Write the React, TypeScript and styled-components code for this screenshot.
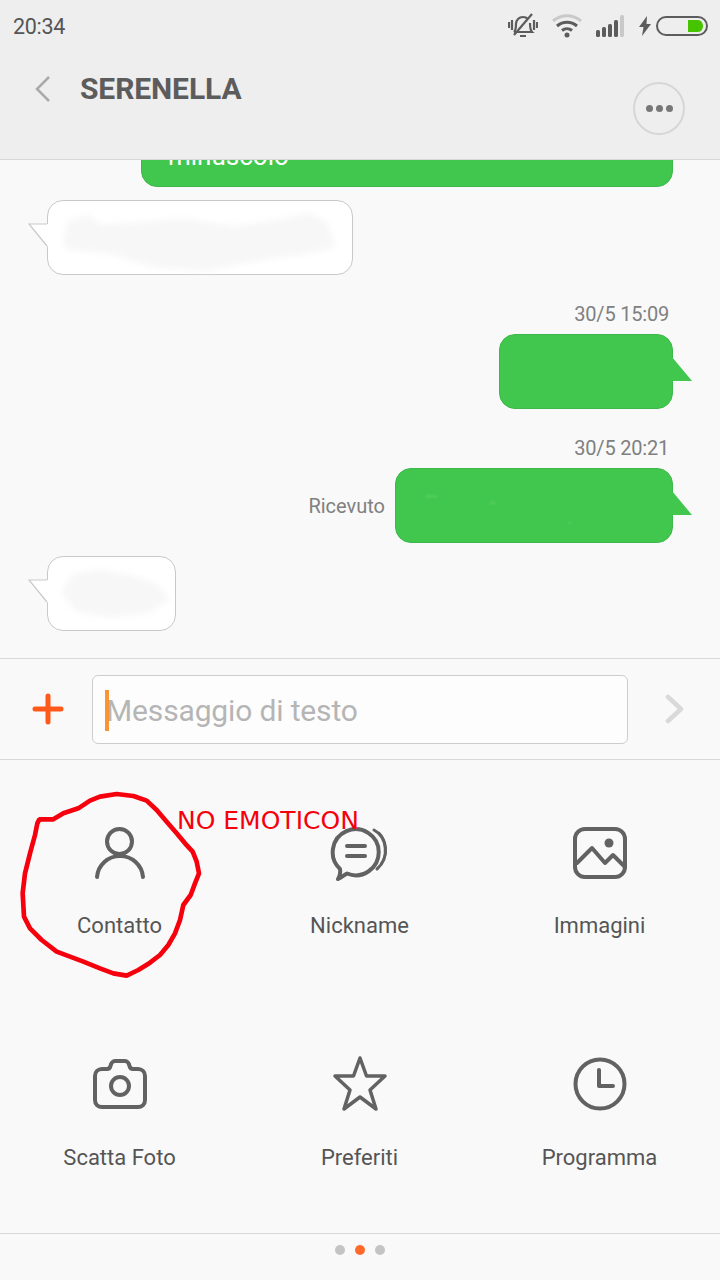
import styled, {createGlobalStyle} from 'styled-components'

const GlobalStyle = createGlobalStyle`
  html, body {
    margin: 0;
    padding: 0;
    background: #f9f9f9;
  }
`

const Page = styled.div`
  position: relative;
  width: 720px;
  height: 1280px;
  overflow: hidden;
  display: flex;
  flex-direction: column;
  background: #f9f9f9;
  font-family: Roboto, "Liberation Sans", sans-serif;
`

const Header = styled.header`
  height: 159px;
  flex: none;
  background: #eeeeee;
  border-bottom: 1px solid #d8d8d8;
`

const StatusBar = styled.div`
  height: 52px;
  display: flex;
  align-items: center;
  justify-content: space-between;
  padding: 0 12px 0 13px;
  color: #555;
  font-size: 21.500px;
  letter-spacing: -0.300px;
`

const StatusIcons = styled.div`
  display: flex;
  align-items: center;
  svg {
    display: block;
  }
`

const NavBar = styled.div`
  display: flex;
  align-items: flex-start;
  padding: 22px 35px 0 34px;
`

const Title = styled.h1`
  flex: 1;
  margin: 0 0 0 28px;
  font-size: 30px;
  line-height: 30px;
  font-weight: 700;
  letter-spacing: -0.100px;
  color: #5c5c5c;
`

const MoreButton = styled.div`
  width: 48px;
  height: 49px;
  margin-top: 8px;
  border: 2px solid #d6d6d6;
  border-radius: 50%;
  display: flex;
  align-items: center;
  justify-content: center;
  gap: 3px;
`

const MoreDot = styled.span`
  width: 7px;
  height: 7px;
  border-radius: 50%;
  background: #777;
`

const Chat = styled.main`
  height: 498px;
  flex: none;
  box-sizing: border-box;
  overflow: hidden;
  display: flex;
  flex-direction: column;
  justify-content: flex-end;
  padding: 0 47px 27px 47px;
`

const Row = styled.div<{$out?: boolean; $gap: number}>`
  flex: none;
  display: flex;
  align-items: center;
  justify-content: ${p => (p.$out ? 'flex-end' : 'flex-start')};
  margin-top: ${p => p.$gap}px;
`

const Stamp = styled.div`
  flex: none;
  margin: 27px 4px 8px 0;
  text-align: right;
  font-size: 20px;
  letter-spacing: -0.200px;
  line-height: 24px;
  color: #808080;
`

const Delivered = styled.span`
  margin-right: 10px;
  font-size: 20px;
  color: #808080;
`

const Bubble = styled.div<{$out?: boolean; $width: number; $height?: number}>`
  position: relative;
  box-sizing: border-box;
  width: ${p => p.$width}px;
  height: ${p => p.$height ?? 75}px;
  border-radius: 16px;
  border: 1px solid ${p => (p.$out ? '#3db84a' : '#c9c9c9')};
  background: ${p => (p.$out ? '#41c74e' : '#ffffff')};
  color: #fff;
  font-size: 26px;
  line-height: 34px;
  padding: 22px 26px 0;
`

const Tail = styled.svg<{$out?: boolean}>`
  position: absolute;
  top: 22px;
  ${p => (p.$out ? 'right: -20px;' : 'left: -20px;')}
  width: 20px;
  height: 26px;
`

const Smudge = styled.svg<{$blur: number}>`
  position: absolute;
  left: 0;
  top: 0;
  width: 100%;
  height: 100%;
  filter: blur(${p => p.$blur}px);
`

const Composer = styled.div`
  height: 100px;
  flex: none;
  border-top: 1px solid #d8d8d8;
  border-bottom: 1px solid #d8d8d8;
  display: flex;
  align-items: center;
  padding: 0 35px 0 32px;
`

const ComposerIcon = styled.svg`
  flex: none;
  display: block;
`

const InputBox = styled.div`
  position: relative;
  box-sizing: border-box;
  flex: 1;
  height: 69px;
  margin: 0 37px 0 28px;
  padding: 2px 0 0 13px;
  display: flex;
  align-items: center;
  background: #fdfdfd;
  border: 1px solid #cdcdcd;
  border-radius: 6px;
  color: #b5b5b5;
  font-size: 30px;
  letter-spacing: -0.150px;
`

const Caret = styled.span`
  position: absolute;
  left: 12px;
  top: 14px;
  width: 4px;
  height: 41px;
  background: #f98a20;
  opacity: 0.9;
`

const Actions = styled.section`
  flex: none;
  height: 473px;
  display: grid;
  grid-template-columns: repeat(3, 240px);
  grid-template-rows: repeat(2, 232px);
  padding-top: 4px;
  box-sizing: border-box;
`

const Action = styled.div`
  display: flex;
  flex-direction: column;
  align-items: center;
  padding-top: 58px;
  box-sizing: border-box;
`

const ActionIcon = styled.svg`
  display: block;
  width: 60px;
  height: 60px;
  fill: none;
  stroke: #626262;
  stroke-width: 4;
  stroke-linecap: round;
  stroke-linejoin: round;
`

const ActionLabel = styled.span`
  margin: 30px 1px 0 0;
  font-size: 22px;
  line-height: 28px;
  color: #555;
`

const Pager = styled.footer`
  flex: 1;
  border-top: 1px solid #d8d8d8;
  display: flex;
  justify-content: center;
  gap: 10px;
  padding-top: 11px;
`

const PagerDot = styled.span<{$on?: boolean}>`
  width: 10px;
  height: 10px;
  border-radius: 50%;
  background: ${p => (p.$on ? '#ff6a2b' : '#c4c4c4')};
`

const Scribble = styled.svg`
  position: absolute;
  left: 0;
  top: 780px;
  width: 220px;
  height: 210px;
  fill: none;
  stroke: #f5000c;
  stroke-width: 14;
  stroke-linejoin: bevel;
`

const Annotation = styled.div`
  position: absolute;
  left: 177px;
  top: 806px;
  font-family: "DejaVu Sans", sans-serif;
  font-size: 25px;
  line-height: 30px;
  color: #f5000c;
`

const MutedBell = () => (
  <svg width="30" height="26" viewBox="0 0 30 26" fill="none" stroke="#5c5c5c" strokeWidth="2.200" style={{marginRight: 14}}>
    <path d="M1 9v6M4 7v10M26 7v10M29 9v6" />
    <path d="M6 19c2-2 2-4 2-8 0-4 3-7 7-7 2 0 4 1 5 2M22 10c0 4 0 7 2 9H6M12 23h6" />
    <path d="M6 22L24 1" />
  </svg>
)

const Wifi = () => (
  <svg width="30" height="24" viewBox="0 0 30 24" fill="none" strokeWidth="3" style={{marginRight: 14}}>
    <path d="M1 7c8-7 20-7 28 0" stroke="#c9c9c9" />
    <path d="M5 12c6-5 14-5 20 0M10 16.500c3-2.500 7-2.500 10 0" stroke="#5c5c5c" />
    <circle cx="15" cy="21" r="2.500" fill="#5c5c5c" />
  </svg>
)

const Signal = () => (
  <svg width="28" height="23" viewBox="0 0 28 23" style={{marginRight: 15}}>
    <rect x="0" y="15" width="4" height="7" rx="1.500" fill="#5c5c5c" />
    <rect x="6" y="12" width="4" height="10" rx="1.500" fill="#5c5c5c" />
    <rect x="12" y="9" width="4" height="13" rx="1.500" fill="#5c5c5c" />
    <rect x="18" y="5" width="4" height="17" rx="1.500" fill="#5c5c5c" />
    <rect x="24" y="0" width="4" height="22" rx="1.500" fill="#c9c9c9" />
  </svg>
)

const Bolt = () => (
  <svg width="12" height="20" viewBox="0 0 12 20" style={{marginRight: 5}}>
    <path d="M8 0L0 11h4.500L3 20l9-12H7.500z" fill="#5c5c5c" />
  </svg>
)

const Battery = () => (
  <svg width="52" height="20" viewBox="0 0 52 20">
    <rect x="1" y="1" width="50" height="18" rx="9" fill="none" stroke="#5c5c5c" strokeWidth="2" />
    <path d="M32 4h10c3 0 5 3 5 6s-2 6-5 6H32z" fill="#46c400" />
  </svg>
)

const PersonIcon = () => (
  <ActionIcon viewBox="0 0 60 60">
    <circle cx="29.500" cy="19.500" r="12.500" />
    <path d="M7 55C8 43 18 34 30 34S52 43 53 55" />
  </ActionIcon>
)

const NicknameIcon = () => (
  <ActionIcon viewBox="0 0 60 60">
    <path d="M10 47A23 23 0 1 1 17 51.500C14 53 12 55 8 57 10 54 10.500 50 10 47z" />
    <path d="M17 24H35M17 34H35" />
    <path d="M44 8C57 15 60 36 47 47" strokeWidth="3" />
    <path d="M49 11C57 19 58 33 51 42" strokeWidth="2.500" />
  </ActionIcon>
)

const ImageIcon = () => (
  <ActionIcon viewBox="0 0 60 60">
    <rect x="5" y="7" width="50" height="48" rx="10" />
    <path d="M7 41L22 26 35 41 43 33 55 45" />
    <circle cx="39" cy="21" r="4.500" fill="#626262" stroke="none" />
  </ActionIcon>
)

const CameraIcon = () => (
  <ActionIcon viewBox="0 0 60 60">
    <path d="M12 15h5c2 0 3-1 3.500-3s1.500-5 4.500-5h10c3 0 4 3 4.500 5s1.500 3 3.500 3h5c4 0 7 3 7 7v24c0 4-3 7-7 7H12c-4 0-7-3-7-7V22c0-4 3-7 7-7z" />
    <circle cx="30" cy="32" r="9" />
  </ActionIcon>
)

const StarIcon = () => (
  <ActionIcon viewBox="0 0 60 60" style={{strokeWidth: 3.500}}>
    <path d="M30 4L36.500 22H55L40 36 46 55 30 43 14 55 20 36 5 22H23.500z" />
  </ActionIcon>
)

const ClockIcon = () => (
  <ActionIcon viewBox="0 0 60 60">
    <circle cx="30" cy="30" r="24.500" />
    <path d="M29 16V32H43" />
  </ActionIcon>
)

const actions = [
  {label: 'Contatto', icon: <PersonIcon />},
  {label: 'Nickname', icon: <NicknameIcon />},
  {label: 'Immagini', icon: <ImageIcon />},
  {label: 'Scatta Foto', icon: <CameraIcon />},
  {label: 'Preferiti', icon: <StarIcon />},
  {label: 'Programma', icon: <ClockIcon />},
]

const InTail = () => (
  <Tail viewBox="0 0 20 26">
    <path d="M20 1H1L20 24z" fill="#fff" />
    <path d="M19 1H1L19 23" fill="none" stroke="#c9c9c9" strokeWidth="1.200" />
  </Tail>
)

const OutTail = () => (
  <Tail $out viewBox="0 0 20 26">
    <path d="M0 0L20 24H0z" fill="#41c74e" />
  </Tail>
)

const App = () => (
  <Page>
    <GlobalStyle />
    <Header>
      <StatusBar>
        <span>20:34</span>
        <StatusIcons>
          <MutedBell />
          <Wifi />
          <Signal />
          <Bolt />
          <Battery />
        </StatusIcons>
      </StatusBar>
      <NavBar>
        <svg width="18" height="30" viewBox="0 0 18 30" fill="none" stroke="#aaa" strokeWidth="2.500">
          <path d="M15 3L3 15 15 27" />
        </svg>
        <Title>SERENELLA</Title>
        <MoreButton>
          <MoreDot />
          <MoreDot />
          <MoreDot />
        </MoreButton>
      </NavBar>
    </Header>

    <Chat>
      <Row $out $gap={0}>
        <Bubble $out $width={532} $height={105}>
          <br />
          minuscolo
        </Bubble>
      </Row>
      <Row $gap={13}>
        <Bubble $width={306}>
          <InTail />
          <Smudge $blur={3} viewBox="0 0 306 75">
            <path d="M12 40L18 20 38 14 50 24 90 22 135 18 190 26 240 18 265 12 284 22 292 48 265 54 220 60 160 72 105 68 60 54 16 50z" fill="#f7f7f7" />
          </Smudge>
        </Bubble>
      </Row>
      <Stamp>30/5 15:09</Stamp>
      <Row $out $gap={0}>
        <Bubble $out $width={174}>
          <OutTail />
        </Bubble>
      </Row>
      <Stamp>30/5 20:21</Stamp>
      <Row $out $gap={0}>
        <Delivered>Ricevuto</Delivered>
        <Bubble $out $width={278}>
          <OutTail />
          <Smudge $blur={1} viewBox="0 0 278 75">
            <path d="M28 28h12M94 35h5M174 55h3" stroke="#5acd65" strokeWidth="2" />
          </Smudge>
        </Bubble>
      </Row>
      <Row $gap={13}>
        <Bubble $width={129}>
          <InTail />
          <Smudge $blur={3} viewBox="0 0 129 75">
            <path d="M13 36L24 18 50 13 82 18 112 28 124 44 102 58 60 62 28 56z" fill="#f7f7f7" />
          </Smudge>
        </Bubble>
      </Row>
    </Chat>

    <Composer>
      <ComposerIcon width="32" height="32" viewBox="0 0 32 32" fill="none" stroke="#ff5a1c" strokeWidth="5" strokeLinecap="round">
        <path d="M16 3V29M3 16H29" />
      </ComposerIcon>
      <InputBox>
        <Caret />
        Messaggio di testo
      </InputBox>
      <ComposerIcon width="20" height="30" viewBox="0 0 20 30" fill="none" stroke="#d9d9d9" strokeWidth="4.500" strokeLinecap="round" strokeLinejoin="round">
        <path d="M3 3L16 15 3 27" />
      </ComposerIcon>
    </Composer>

    <Actions>
      {actions.map(action => (
        <Action key={action.label}>
          {action.icon}
          <ActionLabel>{action.label}</ActionLabel>
        </Action>
      ))}
    </Actions>

    <Pager>
      <PagerDot />
      <PagerDot $on />
      <PagerDot />
    </Pager>

    <Scribble viewBox="0 0 660 630">
      <path d="M118 118L160 118 190 100 235 85 270 62 300 50 350 42 400 48 440 62 470 90 500 125 530 160 555 190 578 215 590 245 597 280 585 310 572 345 550 375 540 420 525 460 505 495 480 525 450 548 415 570 380 587 340 580 300 565 250 545 210 530 170 515 125 480 90 445 72 410 68 340 75 280 90 220 105 165 112 130z" />
    </Scribble>
    <Annotation>NO EMOTICON</Annotation>
  </Page>
)

export default App
